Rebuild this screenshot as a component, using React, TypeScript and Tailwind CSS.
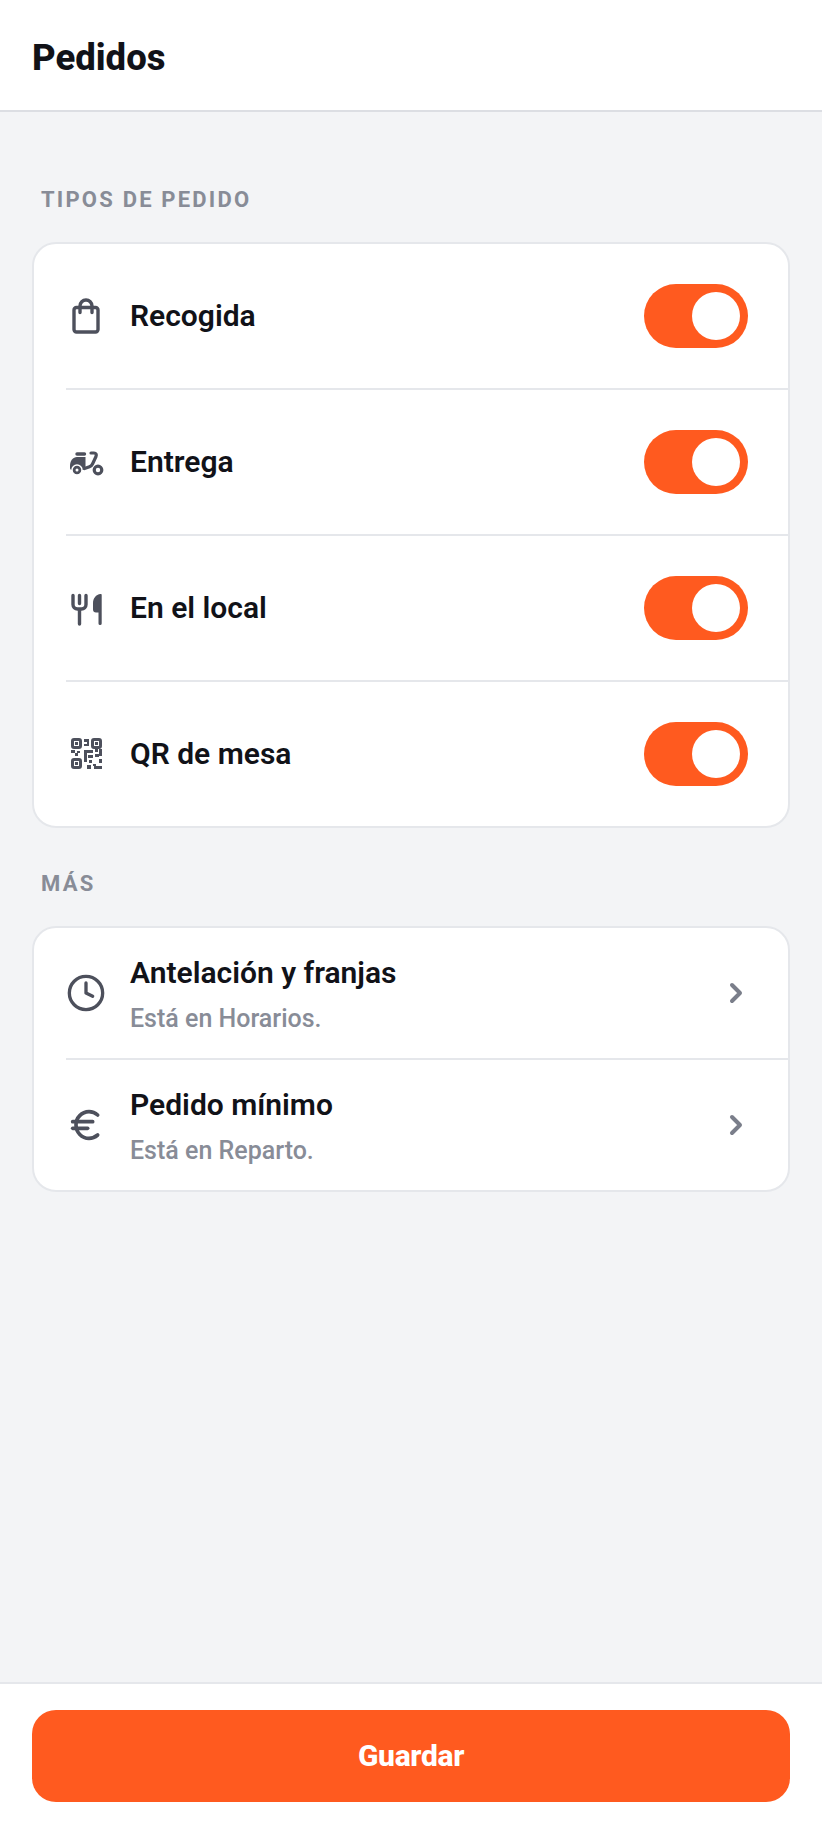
import { ChevronRight, Clock, Euro } from 'lucide-react';
import type { ReactNode } from 'react';

const ICON_CLASS = 'w-10 h-10 text-[#4d505c] shrink-0';

function BagIcon() {
  return (
    <svg viewBox="0 0 40 40" className={ICON_CLASS} fill="none" stroke="currentColor" strokeWidth="3.400" strokeLinecap="round" strokeLinejoin="round">
      <rect x="8" y="11.500" width="24" height="24.500" rx="2.500" />
      <path d="M14 16.500V10a6 6 0 0 1 12 0v6.500" />
    </svg>
  );
}

function ScooterIcon() {
  return (
    <svg viewBox="0 0 40 40" className={ICON_CLASS} fill="none">
      <path d="M11 12h7.500" stroke="currentColor" strokeWidth="3.400" strokeLinecap="round" />
      <path d="M4 24c0-5.500 3-9 7-9h8.500v9.500c0 2-1 3.500-3 3.500H6c-1.200 0-2-.8-2-2v-2z" fill="currentColor" />
      <circle cx="11" cy="28" r="5" fill="currentColor" stroke="white" strokeWidth="1.500" />
      <circle cx="11" cy="28" r="1.500" fill="white" />
      <path d="M25 11h3c2 0 2.800 1.500 2 3.500l-3.500 7.500c-.6 1.300-1.600 2.200-3 2.700l-5 1.800" stroke="currentColor" strokeWidth="3.200" strokeLinecap="round" strokeLinejoin="round" />
      <circle cx="32" cy="28" r="3.800" stroke="currentColor" strokeWidth="3.200" />
    </svg>
  );
}

function CutleryIcon() {
  return (
    <svg viewBox="0 0 40 40" className={ICON_CLASS} fill="none">
      <path d="M7 7.500v9c0 2.800 2 4.500 4.500 4.500h4c2.500 0 4.500-1.700 4.500-4.500v-9M13.500 7.500v8M13.500 21v15" stroke="currentColor" strokeWidth="3.400" strokeLinecap="round" />
      <path d="M34.500 6c-4.500.5-7.500 4-7.500 9.500v6c0 1.800 1.200 3 3 3h2.500V35.500a1.500 1.500 0 0 0 3.200 0V7c0-.7-.5-1.100-1.200-1z" fill="currentColor" />
    </svg>
  );
}

function QrIcon() {
  const cells = [
    [18, 8, 3, 3], [21, 8, 2, 7], [18, 13, 3, 2],
    [5, 19, 4, 3], [11, 20, 3, 2], [9, 22, 3, 3], [18, 19, 9, 3], [18, 22, 3, 9],
    [29, 18, 3, 3], [33, 18, 3, 7], [22, 24, 5, 3], [29, 23, 4, 3],
    [23, 29, 3, 3], [33, 28, 3, 4], [21, 34, 4, 4], [27, 33, 3, 2], [28, 35, 8, 3],
  ];
  return (
    <svg viewBox="0 0 40 40" className={ICON_CLASS} fill="currentColor">
      {[[5, 4], [25, 4], [5, 24]].map(([x, y]) => (
        <g key={`${x}-${y}`}>
          <rect x={x + 1.500} y={y + 1.500} width="8" height="8" rx="1.500" fill="none" stroke="currentColor" strokeWidth="3" />
          <rect x={x + 4} y={y + 4} width="3" height="3" />
        </g>
      ))}
      {cells.map(([x, y, w, h]) => (
        <rect key={`${x}-${y}`} x={x} y={y - 3} width={w} height={h} />
      ))}
    </svg>
  );
}

function Toggle() {
  return (
    <div className="w-[104px] h-16 rounded-full bg-[#ff5a1f] p-2 flex justify-end shrink-0">
      <div className="w-12 h-12 rounded-full bg-white" />
    </div>
  );
}

function SectionLabel({ children }: { children: ReactNode }) {
  return <h2 className="pl-[9px] text-[22px] leading-8 font-bold tracking-[2.2px] text-[#888c97] uppercase">{children}</h2>;
}

function ToggleRow({ icon, label }: { icon: ReactNode; label: string }) {
  return (
    <div className="h-[146px] ml-8 pr-10 border-b-2 border-[#e5e7eb] last:border-b-0 last:h-[144px] flex items-center">
      {icon}
      <span className="ml-6 pb-0.5 flex-1 text-[30px] font-semibold text-[#111218]">{label}</span>
      <Toggle />
    </div>
  );
}

function LinkRow({ icon, title, hint }: { icon: ReactNode; title: string; hint: string }) {
  return (
    <div className="h-[132px] ml-8 pr-9 border-b-2 border-[#e5e7eb] last:border-b-0 last:h-[130px] flex items-center">
      {icon}
      <div className="ml-6 flex-1 pt-[3px]">
        <div className="text-[30px] leading-9 font-semibold text-[#111218]">{title}</div>
        <div className="mt-3 text-[25px] leading-8 font-medium text-[#888c97]">{hint}</div>
      </div>
      <ChevronRight className="w-8 h-8 text-[#7a7e8a]" strokeWidth={3} />
    </div>
  );
}

export default function App() {
  return (
    <div className="h-[1828px] flex flex-col bg-[#f3f4f6] font-['Roboto',sans-serif]">
      <header className="h-[112px] bg-white border-b-2 border-[#dcdee3] px-8 pt-[7px] flex items-center shrink-0">
        <h1 className="text-[36.500px] font-extrabold text-[#111218]">Pedidos</h1>
      </header>
      <main className="flex-1 px-8 pt-[72px]">
        <SectionLabel>Tipos de pedido</SectionLabel>
        <section className="mt-[26px] bg-white rounded-3xl border-2 border-[#e5e7eb] overflow-hidden">
          <ToggleRow icon={<BagIcon />} label="Recogida" />
          <ToggleRow icon={<ScooterIcon />} label="Entrega" />
          <ToggleRow icon={<CutleryIcon />} label="En el local" />
          <ToggleRow icon={<QrIcon />} label="QR de mesa" />
        </section>
        <div className="mt-10">
          <SectionLabel>Más</SectionLabel>
        </div>
        <section className="mt-[26px] bg-white rounded-3xl border-2 border-[#e5e7eb] overflow-hidden">
          <LinkRow icon={<Clock className={ICON_CLASS} strokeWidth={2} />} title="Antelación y franjas" hint="Está en Horarios." />
          <LinkRow icon={<Euro className={ICON_CLASS} strokeWidth={2.200} />} title="Pedido mínimo" hint="Está en Reparto." />
        </section>
      </main>
      <footer className="h-[146px] bg-white border-t-2 border-[#e5e7eb] px-8 pt-[26px] shrink-0">
        <button className="w-full h-[92px] pb-0.5 rounded-3xl bg-[#ff5a1f] text-white text-[30px] font-extrabold tracking-[-0.3px]">Guardar</button>
      </footer>
    </div>
  );
}
